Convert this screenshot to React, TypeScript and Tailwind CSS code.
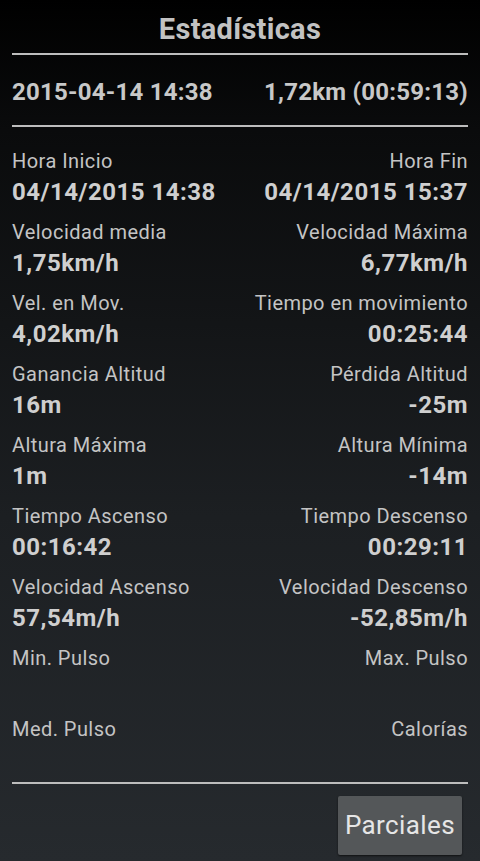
const stats: [string, string, string, string][] = [
  ["Hora Inicio", "04/14/2015 14:38", "Hora Fin", "04/14/2015 15:37"],
  ["Velocidad media", "1,75km/h", "Velocidad Máxima", "6,77km/h"],
  ["Vel. en Mov.", "4,02km/h", "Tiempo en movimiento", "00:25:44"],
  ["Ganancia Altitud", "16m", "Pérdida Altitud", "-25m"],
  ["Altura Máxima", "1m", "Altura Mínima", "-14m"],
  ["Tiempo Ascenso", "00:16:42", "Tiempo Descenso", "00:29:11"],
  ["Velocidad Ascenso", "57,54m/h", "Velocidad Descenso", "-52,85m/h"],
  ["Min. Pulso", "", "Max. Pulso", ""],
  ["Med. Pulso", "", "Calorías", ""],
];

export default function App() {
  return (
    <div
      className="w-[480px] h-[861px] overflow-hidden bg-[linear-gradient(to_bottom,#000000_0%,#0a0b0c_15%,#1c1f22_60%,#262a2e_100%)] text-[#c4c4c4] px-3"
      style={{ fontFamily: "Roboto, 'Noto Sans', sans-serif" }}
    >
      <div className="h-[53px] pt-[6px] flex items-center justify-center">
        <h1 className="text-[29px] font-bold leading-none tracking-[0.3px] text-[#c2c2c2]">Estadísticas</h1>
      </div>
      <div className="h-[2px] bg-[#bdbdbd]" />
      <div className="h-[70px] pt-[3px] flex items-center justify-between text-[24px] font-bold tracking-[0.25px] text-[#c8c8c8]">
        <span>2015-04-14 14:38</span>
        <span>1,72km (00:59:13)</span>
      </div>
      <div className="h-[2px] bg-[#bdbdbd]" />

      <div className="pt-[19px] flex flex-col gap-[11px]">
        {stats.map(([l1, v1, l2, v2]) => (
          <div key={l1} className="flex justify-between">
            <div className="flex flex-col">
              <span className="h-[30px] leading-[30px] text-[20px] tracking-[0.45px]">{l1}</span>
              <span className="h-[30px] leading-[32px] text-[24px] font-bold tracking-[0.5px] text-[#cfcfcf]">{v1}</span>
            </div>
            <div className="flex flex-col items-end">
              <span className="h-[30px] leading-[30px] text-[20px] tracking-[0.45px]">{l2}</span>
              <span className="h-[30px] leading-[32px] text-[24px] font-bold tracking-[0.5px] text-[#cfcfcf]">{v2}</span>
            </div>
          </div>
        ))}
      </div>

      <div className="mt-[8px] h-[2px] bg-[#bdbdbd]" />
      <div className="flex justify-end pt-[12px] pr-[6px]">
        <button className="w-[124px] h-[59px] rounded-[2px] bg-[#545759] text-[#e6e6e6] text-[26px] tracking-[0.4px] shadow-[0_1px_2px_rgba(0,0,0,0.6)]">
          Parciales
        </button>
      </div>
    </div>
  );
}
